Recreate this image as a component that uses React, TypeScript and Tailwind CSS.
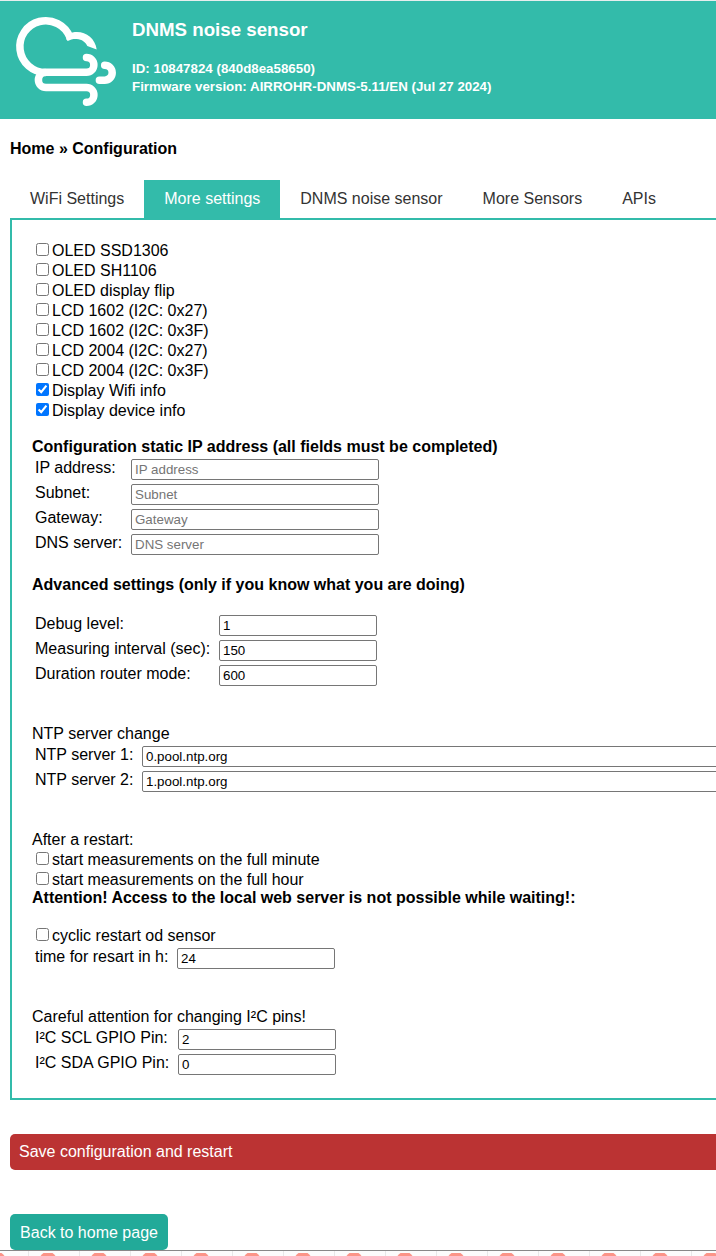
import React from 'react';

const TABS = ['WiFi Settings', 'More settings', 'DNMS noise sensor', 'More Sensors', 'APIs'];

const DISPLAY_OPTIONS = [
  { label: 'OLED SSD1306', checked: false },
  { label: 'OLED SH1106', checked: false },
  { label: 'OLED display flip', checked: false },
  { label: 'LCD 1602 (I2C: 0x27)', checked: false },
  { label: 'LCD 1602 (I2C: 0x3F)', checked: false },
  { label: 'LCD 2004 (I2C: 0x27)', checked: false },
  { label: 'LCD 2004 (I2C: 0x3F)', checked: false },
  { label: 'Display Wifi info', checked: true },
  { label: 'Display device info', checked: true },
];

function Check({ label, checked = false }: { label: string; checked?: boolean }) {
  return (
    <label className="flex h-5 items-start">
      <input type="checkbox" defaultChecked={checked} className="mt-[3px] mr-[3px] ml-1 h-[13px] w-[13px] shrink-0" />
      <span className="mt-0.5 leading-[18px]">{label}</span>
    </label>
  );
}

function Field({
  label,
  labelWidth,
  inputWidth,
  value,
  placeholder,
}: {
  label: string;
  labelWidth: string;
  inputWidth: string;
  value?: string;
  placeholder?: string;
}) {
  return (
    <label className="flex h-[21px] items-start">
      <span className={`${labelWidth} shrink-0 leading-[18px]`}>{label}</span>
      <input
        type="text"
        defaultValue={value}
        placeholder={placeholder}
        className={`${inputWidth} h-[21px] shrink-0 rounded-[2px] border border-[#767676] bg-white px-[3px] text-[13.333px] leading-[15px] placeholder:text-[#757575]`}
      />
    </label>
  );
}

function Fields({ children }: { children: React.ReactNode }) {
  return <div className="flex flex-col gap-1 pt-[3px] pl-[3px]">{children}</div>;
}

function Logo() {
  return (
    <svg viewBox="10 10 110 100" className="h-[100px] w-[110px] shrink-0" fill="none" stroke="#fff" strokeWidth="7.5">
      <path d="M45.800 72.500A25.900 25.900 0 1 1 69.900 37.200" />
      <path d="M67.700 41C70.500 39.400 73.500 38.800 76.700 39C82 39.400 85.500 42 87.300 46L96.700 49.600C95.500 39 86.500 32 77 32C74 32 71 32.500 68 33.800L66 39Z" fill="#fff" stroke="none" />
      <path d="M86.500 57.600A7.350 7.350 0 0 1 86.500 72.300H46A7.600 7.600 0 0 0 46 87.500H86.500A7.400 7.400 0 0 1 86.500 102.300" strokeLinecap="round" />
      <path d="M104.700 65.200A7.500 7.500 0 0 1 104.700 80.200H99.400" strokeLinecap="round" />
    </svg>
  );
}

function BottomStrip() {
  const cells = Array.from({ length: 15 }, (_, i) => i);
  return (
    <div className="flex h-[6px] overflow-hidden border-t border-[#888]">
      <div className="-ml-[22px] flex shrink-0">
        {cells.map((i) => (
          <div key={i} className="flex h-[5px] w-[51px] items-end overflow-hidden border-r border-[#e8e8e8] bg-[#fcfcfc]">
            <svg viewBox="0 0 50 3" className="h-[3px] w-[50px] shrink-0">
              <path d="M11.500 3L13 1.200L14.500 0H23.500L25 1.200L26.500 3Z" fill="#fc9488" />
            </svg>
          </div>
        ))}
      </div>
    </div>
  );
}

export default function App() {
  return (
    <div className="flex h-[1256px] w-[716px] flex-col overflow-hidden bg-white font-['Liberation_Sans',Arial,sans-serif] text-base text-black">
      <header className="flex h-[119px] shrink-0 border-t border-[#e6eeee] bg-[#33bbaa] pt-[9px] pl-[10px] font-bold text-white">
        <Logo />
        <div className="flex flex-col pl-3">
          <h1 className="mt-[9px] text-[18.72px] leading-[21px]">DNMS noise sensor</h1>
          <div className="mt-5 text-[13.333px] leading-[18px]">
            <p>ID: 10847824 (840d8ea58650)</p>
            <p>Firmware version: AIRROHR-DNMS-5.11/EN (Jul 27 2024)</p>
          </div>
        </div>
      </header>

      <p className="mt-[21px] ml-[10px] h-[18px] shrink-0 font-bold leading-[18px]">Home » Configuration</p>

      <nav className="mt-[22px] ml-[10px] flex h-[38px] shrink-0">
        {TABS.map((t) => (
          <button
            key={t}
            className={`h-[38px] px-5 whitespace-nowrap leading-[18px] ${t === 'More settings' ? 'bg-[#33bbaa] text-white' : 'bg-white text-[#333]'}`}
          >
            {t}
          </button>
        ))}
      </nav>

      <main className="ml-[10px] h-[882px] w-[760px] shrink-0 border-2 border-[#33bbaa] p-5">
        <div>
          {DISPLAY_OPTIONS.map((o) => (
            <Check key={o.label} {...o} />
          ))}
        </div>

        <h2 className="mt-[18px] font-bold leading-[18px]">Configuration static IP address (all fields must be completed)</h2>
        <Fields>
          {['IP address', 'Subnet', 'Gateway', 'DNS server'].map((n) => (
            <Field key={n} label={`${n}:`} placeholder={n} labelWidth="w-[96px]" inputWidth="w-[248px]" />
          ))}
        </Fields>

        <h2 className="mt-[21px] font-bold leading-[18px]">Advanced settings (only if you know what you are doing)</h2>
        <div className="mt-[18px]">
          <Fields>
            <Field label="Debug level:" value="1" labelWidth="w-[184px]" inputWidth="w-[158px]" />
            <Field label="Measuring interval (sec):" value="150" labelWidth="w-[184px]" inputWidth="w-[158px]" />
            <Field label="Duration router mode:" value="600" labelWidth="w-[184px]" inputWidth="w-[158px]" />
          </Fields>
        </div>

        <p className="mt-[39px] leading-[18px]">NTP server change</p>
        <Fields>
          <Field label="NTP server 1:" value="0.pool.ntp.org" labelWidth="w-[107px]" inputWidth="w-[600px]" />
          <Field label="NTP server 2:" value="1.pool.ntp.org" labelWidth="w-[107px]" inputWidth="w-[600px]" />
        </Fields>

        <p className="mt-[39px] leading-[18px]">After a restart:</p>
        <Check label="start measurements on the full minute" />
        <Check label="start measurements on the full hour" />
        <p className="font-bold leading-[18px]">Attention! Access to the local web server is not possible while waiting!:</p>

        <div className="mt-[18px]">
          <Check label="cyclic restart od sensor" />
          <Fields>
            <Field label="time for resart in h:" value="24" labelWidth="w-[142px]" inputWidth="w-[158px]" />
          </Fields>
        </div>

        <p className="mt-[39px] leading-[18px]">Careful attention for changing I²C pins!</p>
        <Fields>
          <Field label="I²C SCL GPIO Pin:" value="2" labelWidth="w-[143px]" inputWidth="w-[158px]" />
          <Field label="I²C SDA GPIO Pin:" value="0" labelWidth="w-[143px]" inputWidth="w-[158px]" />
        </Fields>
      </main>

      <button className="mt-[34px] ml-[10px] h-9 w-[760px] shrink-0 rounded-[5px] bg-[#bb3333] pl-[9px] text-left text-white">
        Save configuration and restart
      </button>
      <button className="mt-11 ml-[10px] h-9 w-[158px] shrink-0 rounded-[5px] bg-[#22aa99] pt-0.5 text-center text-white">
        Back to home page
      </button>
      <BottomStrip />
    </div>
  );
}
